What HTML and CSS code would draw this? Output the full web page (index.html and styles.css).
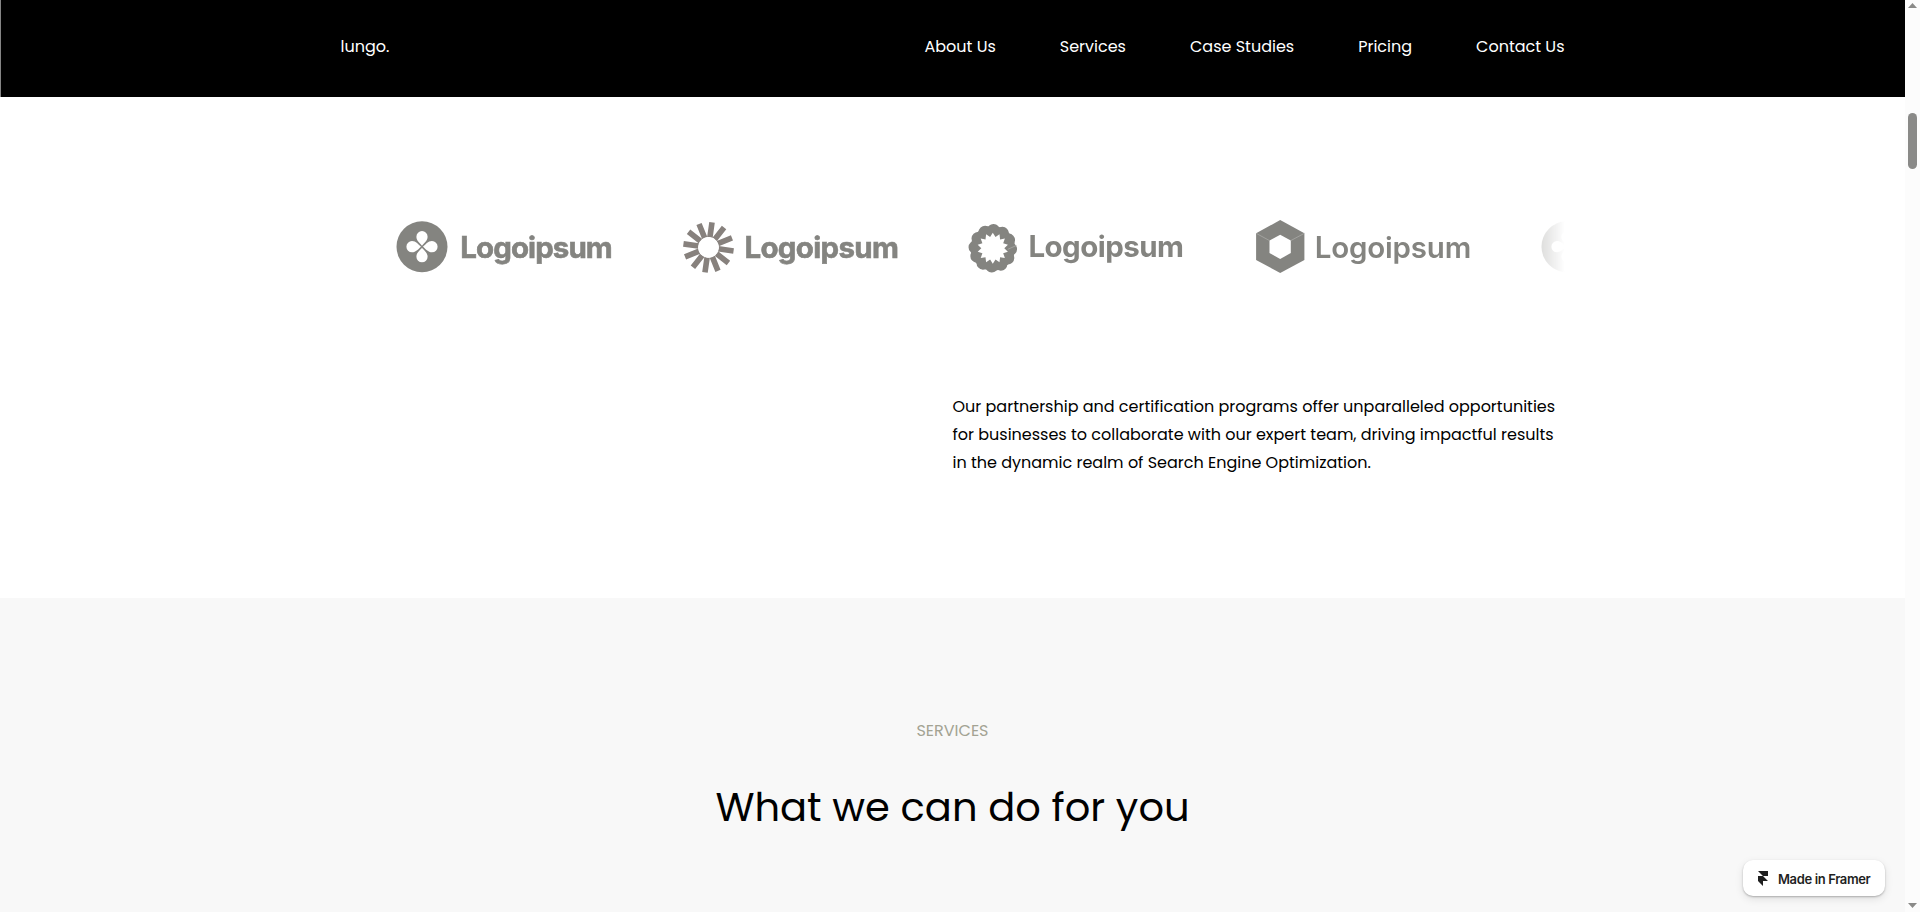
FILE: index.html
```html
<!DOCTYPE html>
<html lang="en">
<head>
    <meta charset="UTF-8">
    <title>lungo.</title>
    <link rel="stylesheet" href="styles.css">
</head>
<body>
    <div class="page">
        <header class="header">
            <a class="brand" href="#">lungo.</a>
            <nav class="nav">
                <a href="#">About Us</a>
                <a href="#">Services</a>
                <a href="#">Case Studies</a>
                <a href="#">Pricing</a>
                <a href="#">Contact Us</a>
            </nav>
        </header>

        <section class="partners">
            <div class="ticker">
                <svg class="logo" viewBox="0 0 286.2 90">
                    <defs>
                        <path id="petal" d="M0-1C-2-3.5-5.6-6-5.6-10A5.6 5.6 0 0 1 5.6-10C5.6-6 2-3.5 0-1Z"/>
                    </defs>
                    <circle cx="42" cy="46.7" r="25.5"/>
                    <g class="hole" transform="translate(42 46.7)">
                        <use href="#petal"/>
                        <use href="#petal" transform="rotate(90)"/>
                        <use href="#petal" transform="rotate(180)"/>
                        <use href="#petal" transform="rotate(270)"/>
                    </g>
                    <text class="bold" x="80.3" y="58" textLength="152.5">Logoipsum</text>
                </svg>
                <svg class="logo" viewBox="0 0 286.2 90">
                    <defs>
                        <path id="rays" d="M-2.8-25.3H2.8V-10H-2.8ZM-2.8 10H2.8V25.3H-2.8Z"/>
                    </defs>
                    <g class="sun" transform="translate(42.5 47.4) rotate(8)">
                        <use href="#rays"/>
                        <use href="#rays" transform="rotate(30)"/>
                        <use href="#rays" transform="rotate(60)"/>
                        <use href="#rays" transform="rotate(90)"/>
                        <use href="#rays" transform="rotate(120)"/>
                        <use href="#rays" transform="rotate(150)"/>
                        <circle class="hole" r="10.4"/>
                    </g>
                    <text class="bold" x="78.4" y="57.6" textLength="154.5">Logoipsum</text>
                </svg>
                <svg class="logo" viewBox="0 0 286.2 90">
                    <g transform="translate(40.8 48.3)">
                        <circle class="scallops" r="17.8" transform="rotate(-88)"/>
                        <circle r="22.3"/>
                        <path class="hole" d="M0-15.5 2.7-11.2 6.7-14 7.3-8.9 12.1-9.7 10.4-5 15.1-3.5 11.5 0 15.1 3.5 10.4 5 12.1 9.7 7.3 8.9 6.7 14 2.7 11.2 0 15.5-2.7 11.2-6.7 14-7.3 8.9-12.1 9.7-10.4 5-15.1 3.5-11.5 0-15.1-3.5-10.4-5-12.1-9.7-7.3-8.9-6.7-14-2.7-11.2Z"/>
                        <path class="seam" d="M15 1 24-3"/>
                    </g>
                    <text class="geo" x="76.4" y="56.6" textLength="155.5">Logoipsum</text>
                </svg>
                <svg class="logo" viewBox="0 0 286.2 90">
                    <path d="M41.2 20 65.4 33.3V60L41.2 73 17.1 60V33.3Z"/>
                    <path class="hole" d="M41.2 34.8 51.8 40.6V53L41.2 59 30.5 53V40.6Z"/>
                    <path class="seam" d="M17.1 33.3 30.5 40.6M65.4 33.3 51.8 40.6"/>
                    <text class="semi" x="75.7" y="57.8" textLength="156.5">Logoipsum</text>
                </svg>
                <svg class="logo" viewBox="0 0 286.2 90">
                    <circle cx="42" cy="46.7" r="25.5"/>
                    <g class="hole" transform="translate(42 46.7)">
                        <use href="#petal"/>
                        <use href="#petal" transform="rotate(90)"/>
                        <use href="#petal" transform="rotate(180)"/>
                        <use href="#petal" transform="rotate(270)"/>
                    </g>
                </svg>
            </div>
            <p class="intro">Our partnership and certification programs offer unparalleled opportunities for businesses to collaborate with our expert team, driving impactful results in the dynamic realm of Search Engine Optimization.</p>
        </section>

        <section class="services">
            <p class="eyebrow">SERVICES</p>
            <h2 class="title">What we can do for you</h2>
        </section>

        <a class="badge" href="#">
            <svg class="badge-icon" viewBox="0 0 10 15"><path d="M0 0H10V5H5ZM0 5H5L10 10H0ZM0 10H5V15Z"/></svg>
            <span>Made in Framer</span>
        </a>
    </div>

    <div class="scrollbar">
        <svg class="arrow" viewBox="0 0 9 5"><path d="M4.5 0 9 5H0Z"/></svg>
        <div class="track"><div class="thumb"></div></div>
        <svg class="arrow" viewBox="0 0 9 5"><path d="M0 0H9L4.5 5Z"/></svg>
    </div>
</body>
</html>
```
FILE: styles.css
```css
* {
    box-sizing: border-box;
}
body {
    margin: 0;
    height: 100vh;
    display: flex;
    overflow: hidden;
    font-family: 'Poppins', 'Inter', sans-serif;
    font-size: 16px;
    color: #000;
    background-color: #fff;
}
a {
    color: inherit;
    text-decoration: none;
}
.page {
    position: relative;
    flex: 1;
    min-width: 0;
    display: flex;
    flex-direction: column;
}
.header {
    height: 97px;
    padding: 0 340.5px 4px 339.5px;
    border-left: 1px solid #858585;
    display: flex;
    align-items: center;
    justify-content: space-between;
    background-color: #000;
    color: #fff;
}
.nav {
    display: flex;
    gap: 64px;
}
.partners {
    height: 501px;
    padding: 103px 340.5px 0;
}
.ticker {
    display: flex;
    height: 90px;
    padding-left: 39.5px;
    overflow: hidden;
    -webkit-mask-image: linear-gradient(to right, transparent, #000 56px, #000 calc(100% - 88px), transparent);
    mask-image: linear-gradient(to right, transparent, #000 56px, #000 calc(100% - 88px), transparent);
}
.logo {
    flex: none;
    width: 286.2px;
    height: 90px;
    fill: #848480;
    font-family: 'Inter', sans-serif;
    font-size: 29.5px;
}
.logo .bold {
    font-weight: 700;
    stroke: #848480;
    stroke-width: 0.6;
}
.logo .semi {
    font-weight: 600;
}
.logo .geo {
    font-weight: 700;
}
.logo .sun {
    fill: #87817d;
}
.logo .hole {
    fill: #fff;
}
.logo .seam {
    fill: none;
    stroke: #b5b5b2;
    stroke-width: 0.6;
}
.logo .scallops {
    fill: none;
    stroke: #848480;
    stroke-width: 13;
    stroke-linecap: round;
    stroke-dasharray: 0 9.32;
}
.intro {
    width: 612px;
    margin: 103px 0 0 auto;
    line-height: 28px;
}
.services {
    flex: 1;
    padding-top: 121px;
    background-color: #f8f8f8;
    text-align: center;
}
.eyebrow {
    margin: 0;
    line-height: 24px;
    color: #a3a393;
}
.title {
    margin: 36px 0 0;
    font-size: 40px;
    font-weight: 400;
    line-height: 56px;
}
.badge {
    position: absolute;
    right: 20px;
    bottom: 16px;
    width: 142px;
    height: 36px;
    padding-left: 15px;
    display: flex;
    align-items: center;
    gap: 10px;
    border-radius: 10px;
    background-color: #fff;
    color: #1f1f1f;
    font-family: 'Inter', sans-serif;
    font-size: 13px;
    font-weight: 600;
    letter-spacing: -0.37px;
    white-space: nowrap;
    box-shadow: 0 1px 2px rgba(0, 0, 0, 0.25), 0 3px 8px rgba(0, 0, 0, 0.1);
}
.badge span {
    padding-top: 1px;
}
.badge-icon {
    width: 10px;
    height: 15px;
    fill: #1f1f1f;
}
.scrollbar {
    width: 15px;
    padding: 3px 3px 4px;
    display: flex;
    flex-direction: column;
    background-color: #fcfcfc;
}
.arrow {
    width: 9px;
    height: 5px;
    fill: #8a8a88;
}
.track {
    flex: 1;
    padding-top: 105px;
}
.thumb {
    height: 56px;
    border-radius: 5px;
    background-color: #8a8a88;
}
```
